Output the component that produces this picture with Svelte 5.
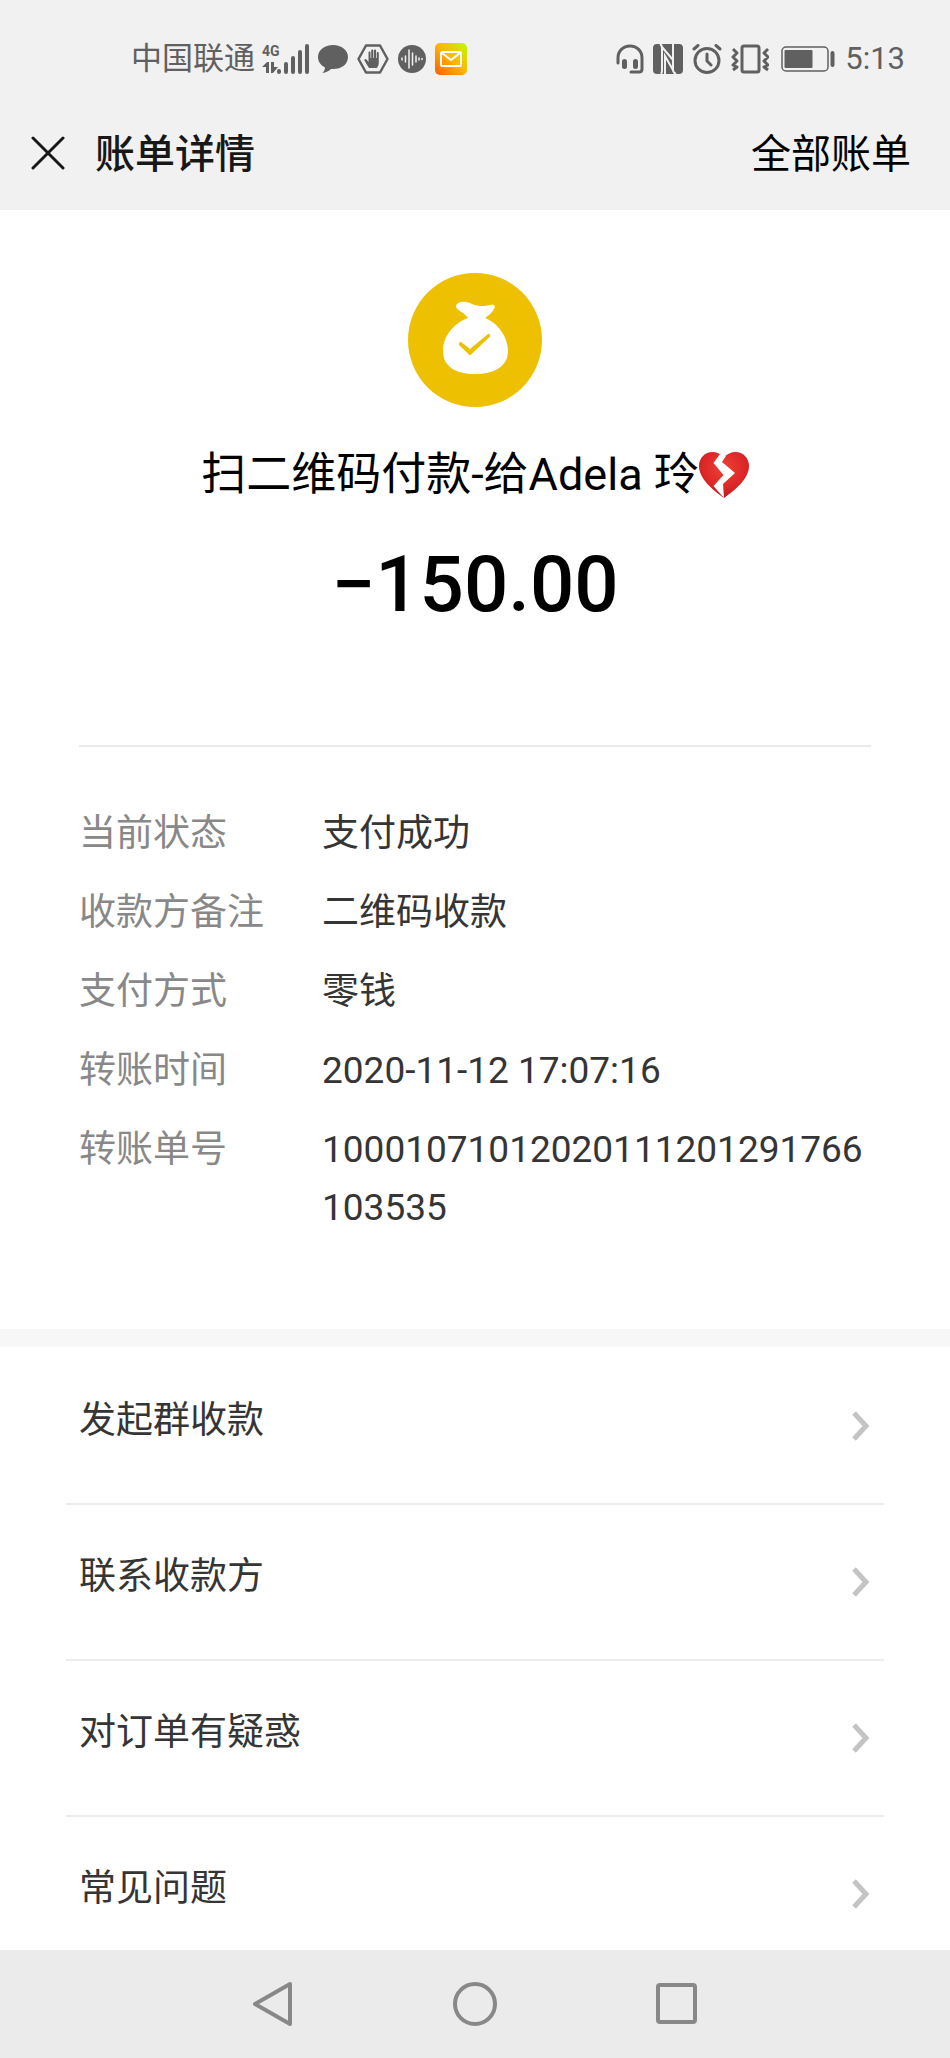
<script lang="ts">
  interface Detail {
    label: string;
    value: string;
  }

  const carrier = '中国联通';
  const time = '5:13';

  const details: Detail[] = [
    { label: '当前状态', value: '支付成功' },
    { label: '收款方备注', value: '二维码收款' },
    { label: '支付方式', value: '零钱' },
    { label: '转账时间', value: '2020-11-12 17:07:16' },
    { label: '转账单号', value: '10001071012020111201291766103535' },
  ];

  const actions = ['发起群收款', '联系收款方', '对订单有疑惑', '常见问题'];
</script>

<div class="screen">
  <header class="header">
    <!-- System status bar -->
    <div class="status-bar">
      <div class="status-left">
        <span class="carrier">{carrier}</span>
        <div class="network">
          <span class="network-type">4G</span>
          <svg width="16" height="12" viewBox="0 0 16 12" fill="currentColor">
            <path d="M0 5 5 0h2v11H4V5zM9 0h3v5h4l-5 6H9z" />
          </svg>
        </div>
        <svg class="signal" width="32" height="30" viewBox="0 0 32 30" stroke="currentColor" stroke-width="4" stroke-linecap="round">
          <path d="M2 27v1M9 20v8M16 14v14M23 8v20M30 2v26" />
        </svg>
        <svg class="bubble" width="30" height="28" viewBox="0 0 30 28" fill="currentColor">
          <path d="M15 0C6.500 0 0 5 0 12c0 4.500 2.500 8 7 10.500 0 2-1 4-2.500 5.500C8 27.500 11 26 13 24c10 .8 17-4.500 17-12C30 5 23.500 0 15 0z" />
        </svg>
        <svg width="32" height="30" viewBox="0 0 32 30">
          <path d="M9 1.500h14L30.500 15 23 28.500H9L1.500 15z" fill="none" stroke="currentColor" stroke-width="2.500" stroke-linejoin="round" />
          <path d="M12 24c-1.500-2-3-5-4.500-7.500-.5-1.500 1-2 2-1l2 2.500V8.500c0-1.500 2-1.500 2 0V14h.7V6.500c0-1.500 2.100-1.500 2.100 0V14h.7V6.500c0-1.500 2.100-1.500 2.100 0V14h.7V9c0-1.500 2-1.500 2 0v9.500c0 2.500-.8 4-2 5.500z" fill="currentColor" />
        </svg>
        <svg width="28" height="28" viewBox="0 0 28 28">
          <circle cx="14" cy="14" r="14" fill="currentColor" />
          <path d="M4 13v2M7.500 11v6M11 5v18M14.500 8v12M18 11v6M21 13v2M24 13.500v1" stroke="#f1f1f1" stroke-width="1.500" stroke-linecap="round" />
        </svg>
        <svg width="32" height="32" viewBox="0 0 32 32">
          <defs>
            <linearGradient id="mail" x1="0" y1="1" x2="1" y2="0">
              <stop offset="0" stop-color="#ff5a00" />
              <stop offset=".5" stop-color="#ffb400" />
              <stop offset="1" stop-color="#b9ff00" />
            </linearGradient>
          </defs>
          <rect width="32" height="32" rx="5" fill="url(#mail)" />
          <rect x="6" y="9" width="20" height="14" rx="1" fill="none" stroke="#fff" stroke-width="2" />
          <path d="m7 10 9 7 9-7" fill="none" stroke="#fff" stroke-width="2" />
        </svg>
      </div>
      <div class="status-right">
        <svg width="28" height="30" viewBox="0 0 28 30" fill="none" stroke="currentColor" stroke-width="3" stroke-linecap="round">
          <path d="M2 19v-5C2 7 7 2 14 2s12 5 12 12v11c0 2-1 3-3 3h-8" />
          <path d="M8.500 17.500v5M19.500 17.500v5" stroke-width="5" />
        </svg>
        <svg width="30" height="30" viewBox="0 0 30 30">
          <rect width="30" height="30" rx="4" fill="currentColor" />
          <path d="M7 0c2 1 2 2 2 4v22c0 2 0 3-1 4M9 3l11 13V0M23 30c-2-1-3-2-3-4L12 12v18M20 0v27" fill="none" stroke="#f1f1f1" stroke-width="2" />
        </svg>
        <svg width="30" height="30" viewBox="0 0 30 30" fill="none" stroke="currentColor" stroke-width="3" stroke-linecap="round">
          <circle cx="15" cy="16.500" r="12" />
          <path d="M15 10v7l4 4M2 5l4-3.500M28 5l-4-3.500" />
        </svg>
        <svg width="38" height="30" viewBox="0 0 38 30" fill="none" stroke="currentColor" stroke-width="3" stroke-linejoin="round">
          <rect x="11" y="2" width="17" height="26" rx="2" />
          <path d="m2 5 4 4-4 4 4 4-4 4 4 2-4 3M37 5l-4 4 4 4-4 4 4 4-4 2 4 3" stroke-width="3" />
        </svg>
        <svg class="battery" width="54" height="26" viewBox="0 0 54 26">
          <rect x="1" y="1" width="46" height="24" rx="4" fill="none" stroke="currentColor" stroke-width="1.500" />
          <rect x="3.500" y="4" width="28" height="18" rx="1" fill="currentColor" />
          <rect x="49.500" y="5" width="4" height="16" rx="2" fill="currentColor" />
        </svg>
        <span class="time">{time}</span>
      </div>
    </div>

    <!-- Title bar -->
    <div class="title-bar">
      <button type="button" class="close" aria-label="关闭">
        <svg width="34" height="34" viewBox="0 0 34 34" stroke="currentColor" stroke-width="3" stroke-linecap="round">
          <path d="M2 2l30 30M32 2 2 32" />
        </svg>
      </button>
      <h1 class="title">账单详情</h1>
      <a class="all-bills" href="#bills">全部账单</a>
    </div>
  </header>

  <main class="content">
    <section class="bill">
      <div class="summary">
        <svg class="bag" width="134" height="134" viewBox="0 0 134 134">
          <circle cx="67" cy="67" r="67" fill="#edc002" />
          <path d="M60 45c-3-5-12-8-12-11.500C48 29 57 27 64 31c7 3 13 2 18 1 4-1 6 1 4 4-2 4-6 7-9 9 13 5 23 19 23 33 0 15-13 23-33 23S35 93 35 78c0-15 11-28 25-33z" fill="#fff" />
          <path d="m53 69 9 7 18-15c2-.5 3 1 1.500 3L62 82.500 51 72c-.5-2 .5-3 2-3z" fill="#edc002" />
        </svg>
        <h2 class="payee">
          <span>扫二维码付款-给Adela 玲</span>
          <svg width="50" height="46" viewBox="0 0 50 46" role="img" aria-label="心碎">
            <defs>
              <radialGradient id="heart" cx=".5" cy=".35" r=".65">
                <stop offset="0" stop-color="#ea4335" />
                <stop offset=".65" stop-color="#de2627" />
                <stop offset="1" stop-color="#b81c24" />
              </radialGradient>
            </defs>
            <path d="M25 46C14 38 0 27 0 14 0 6 6 0 13.500 0 18 0 22 2 25 5c3-3 7-5 11.500-5C44 0 50 6 50 14c0 13-14 24-25 32z" fill="url(#heart)" />
            <path d="M21 2 14.500 11l10 12-10 11L25 46l-1-14 12-11-13-11 4-6z" fill="#fff" />
          </svg>
        </h2>
        <p class="amount">−150.00</p>
      </div>

      <dl class="details">
        {#each details as item}
          <div class="detail">
            <dt>{item.label}</dt>
            <dd>{item.value}</dd>
          </div>
        {/each}
      </dl>
    </section>

    <ul class="actions">
      {#each actions as action}
        <li>
          <button type="button" class="action">
            <span>{action}</span>
            <svg width="20" height="30" viewBox="0 0 20 30" fill="none" stroke="#c4c4c4" stroke-width="5">
              <path d="m3 2 12 13L3 28" />
            </svg>
          </button>
        </li>
      {/each}
    </ul>
  </main>

  <!-- System navigation -->
  <nav class="nav-bar">
    <button type="button" aria-label="返回">
      <svg width="46" height="46" viewBox="0 0 46 46" fill="none" stroke="currentColor" stroke-width="4" stroke-linejoin="round">
        <path d="M40 3v40L5 23z" />
      </svg>
    </button>
    <button type="button" aria-label="主屏幕">
      <svg width="46" height="46" viewBox="0 0 46 46" fill="none" stroke="currentColor" stroke-width="4">
        <circle cx="23" cy="23" r="20" />
      </svg>
    </button>
    <button type="button" aria-label="最近任务">
      <svg width="46" height="46" viewBox="0 0 46 46" fill="none" stroke="currentColor" stroke-width="4">
        <rect x="4" y="4" width="37" height="37" rx="2" />
      </svg>
    </button>
  </nav>
</div>

<style>
  :global(body) {
    margin: 0;
    background: #fff;
  }

  .screen {
    display: flex;
    flex-direction: column;
    height: 100vh;
    font-family: Roboto, 'Noto Sans CJK SC', sans-serif;
    color: #353535;
  }

  svg {
    display: block;
    flex-shrink: 0;
  }

  button {
    padding: 0;
    border: none;
    background: none;
    color: inherit;
    font: inherit;
    cursor: pointer;
  }

  h1,
  h2,
  p,
  dl,
  dd,
  ul {
    margin: 0;
    padding: 0;
  }

  /* Header */
  .header {
    flex-shrink: 0;
    background: #f1f1f1;
  }

  .status-bar {
    display: flex;
    align-items: center;
    justify-content: space-between;
    padding: 38px 45px 16px 131px;
    height: 42px;
    color: #606060;
    font-size: 31px;
    line-height: 42px;
  }

  .status-left,
  .status-right {
    display: flex;
    align-items: center;
    gap: 9px;
  }

  .carrier {
    margin-right: -2px;
  }

  .network {
    display: flex;
    flex-direction: column;
    gap: 4px;
    width: 16px;
  }

  .network-type {
    font-size: 14px;
    font-weight: 700;
    line-height: 14px;
  }

  .signal {
    margin-left: -10px;
  }

  .battery {
    margin: 0 1px 0 3px;
  }

  /* Title bar */
  .title-bar {
    display: flex;
    align-items: center;
    padding: 0 39px 0 31px;
    height: 114px;
    color: #181818;
    font-size: 40px;
    line-height: 58px;
  }

  .title,
  .all-bills {
    padding-top: 4px;
  }

  .title {
    flex: 1;
    margin-left: 30px;
    font-size: inherit;
    font-weight: 500;
  }

  .all-bills {
    color: #000;
    text-decoration: none;
  }

  /* Bill */
  .content {
    flex: 1;
    min-height: 0;
    overflow: hidden;
  }

  .bill {
    padding: 63px 79px 92px;
    border-bottom: 18px solid #f7f7f7;
  }

  .summary {
    display: flex;
    flex-direction: column;
    align-items: center;
    padding-bottom: 108px;
    border-bottom: 2px solid #ebebeb;
    color: #000;
  }

  .payee {
    display: flex;
    align-items: center;
    margin-top: 36px;
    font-size: 45px;
    font-weight: 400;
    line-height: 64px;
  }

  .amount {
    margin-top: 26px;
    font-size: 78px;
    font-weight: 500;
    line-height: 104px;
  }

  .details {
    display: flex;
    flex-direction: column;
    gap: 21px;
    padding-top: 58px;
    font-size: 37px;
    line-height: 58px;
  }

  .detail {
    display: flex;
  }

  dt {
    flex: 0 0 243px;
    color: #888;
  }

  dd {
    flex: 1;
    min-width: 0;
    word-break: break-all;
  }

  /* Actions */
  .actions {
    padding: 2px 66px 0;
    list-style: none;
  }

  .actions li + li {
    border-top: 2px solid #ededed;
  }

  .action {
    display: flex;
    align-items: center;
    justify-content: space-between;
    width: 100%;
    height: 154px;
    padding: 0 13px;
    font-size: 37px;
    line-height: 58px;
  }

  .action span {
    padding-bottom: 10px;
  }

  /* System navigation */
  .nav-bar {
    display: flex;
    flex-shrink: 0;
    align-items: center;
    justify-content: center;
    gap: 156px;
    height: 108px;
    background: #ebebeb;
    color: #888;
  }
</style>
